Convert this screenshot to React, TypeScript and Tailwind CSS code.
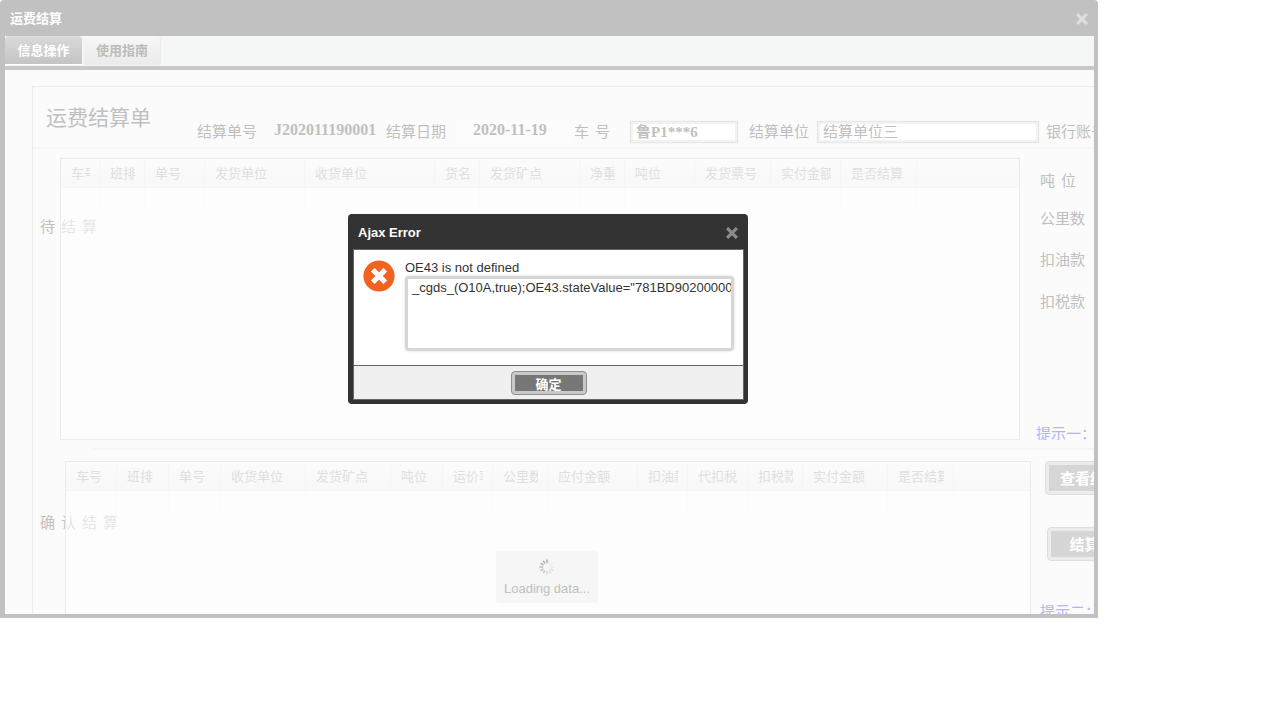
import { useState, type ReactNode } from "react";

type Column = { label: string; width: string };

const pendingColumns: Column[] = [
  { label: "车号", width: "w-[39px]" },
  { label: "班排", width: "w-[45px]" },
  { label: "单号", width: "w-[60px]" },
  { label: "发货单位", width: "w-[100px]" },
  { label: "收货单位", width: "w-[130px]" },
  { label: "货名", width: "w-[45px]" },
  { label: "发货矿点", width: "w-[100px]" },
  { label: "净重", width: "w-[45px]" },
  { label: "吨位", width: "w-[70px]" },
  { label: "发货票号", width: "w-[76px]" },
  { label: "实付金额", width: "w-[70px]" },
  { label: "是否结算", width: "w-[76px]" },
];

const confirmedColumns: Column[] = [
  { label: "车号", width: "w-[51px]" },
  { label: "班排", width: "w-[52px]" },
  { label: "单号", width: "w-[52px]" },
  { label: "收货单位", width: "w-[85px]" },
  { label: "发货矿点", width: "w-[85px]" },
  { label: "吨位", width: "w-[52px]" },
  { label: "运价率", width: "w-[50px]" },
  { label: "公里数", width: "w-[55px]" },
  { label: "应付金额", width: "w-[90px]" },
  { label: "扣油款", width: "w-[50px]" },
  { label: "代扣税", width: "w-[60px]" },
  { label: "扣税款", width: "w-[55px]" },
  { label: "实付金额", width: "w-[85px]" },
  { label: "是否结算", width: "w-[66px]" },
];

const spokes = [
  "#a8a8a8",
  "#f0f0f0",
  "#ececec",
  "#e8e8e8",
  "#e2e2e2",
  "#dcdcdc",
  "#d2d2d2",
  "#cacaca",
  "#c4c4c4",
  "#bcbcbc",
  "#b6b6b6",
  "#b0b0b0",
];

function CloseIcon() {
  return (
    <svg viewBox="0 0 12 12" className="size-3" aria-hidden>
      <path
        d="M2.2 2.2 9.8 9.8M9.8 2.2 2.2 9.8"
        stroke="currentColor"
        strokeWidth="3.2"
        strokeLinecap="square"
      />
    </svg>
  );
}

function ErrorIcon() {
  return (
    <svg viewBox="0 0 32 32" className="size-8 shrink-0" aria-hidden>
      <circle cx="16" cy="16" r="15.6" fill="#f26322" />
      <path
        d="M11.6 11.6 20.4 20.4M20.4 11.6 11.6 20.4"
        stroke="#fff"
        strokeWidth="5.2"
        strokeLinecap="square"
      />
    </svg>
  );
}

function Spinner() {
  return (
    <svg viewBox="0 0 16 16" className="size-4" aria-hidden>
      {spokes.map((color, i) => (
        <path
          key={color}
          d="M8 .5V4"
          stroke={color}
          strokeWidth="1.5"
          transform={`rotate(${i * 30} 8 8)`}
        />
      ))}
    </svg>
  );
}

function Grid({ name, columns }: { name: string; columns: Column[] }) {
  return (
    <table
      aria-label={name}
      className="w-full table-fixed border-separate border-spacing-0 text-left text-[13px] leading-5"
    >
      <thead>
        <tr className="h-[29px] bg-linear-to-b from-[#fbfbfb] to-[#f8f8f8]">
          {columns.map((col) => (
            <th
              key={col.label}
              className={`${col.width} border-r border-b border-[#f5f5f5] pt-px pr-[9px] pb-0 pl-2.5 font-normal text-[#dfdfdf]`}
            >
              <span className="block overflow-hidden whitespace-nowrap">
                {col.label}
              </span>
            </th>
          ))}
          <th className="border-b border-[#f5f5f5] p-0" />
        </tr>
      </thead>
      <tbody>
        <tr className="h-6">
          {columns.map((col) => (
            <td key={col.label} className="border-r border-[#fbfbfb] p-0" />
          ))}
          <td className="p-0" />
        </tr>
      </tbody>
    </table>
  );
}

/** Spaced caption that runs underneath its grid. */
function SideCaption({ text, className }: { text: string; className: string }) {
  return (
    <h2 className={`absolute left-[7px] flex gap-1.5 leading-5 ${className}`}>
      {text.split("").map((char) => (
        <span key={char}>{char}</span>
      ))}
    </h2>
  );
}

function FormButton({
  className,
  children,
}: {
  className: string;
  children: ReactNode;
}) {
  return (
    <button
      type="button"
      className={`h-[34px] w-[90px] shrink-0 rounded border border-[#dedede] bg-[#ececec] p-[3px] font-bold whitespace-nowrap text-white ${className}`}
    >
      <span className="flex h-full items-center justify-center bg-[#d6d6d6] pt-0.5">
        {children}
      </span>
    </button>
  );
}

function ErrorDialog({ onClose }: { onClose: () => void }) {
  return (
    <div className="absolute inset-0 z-30 flex items-center justify-center pr-0.5">
      <div
        role="alertdialog"
        aria-labelledby="error-title"
        className="w-[400px] rounded bg-[#333] pr-1 pb-1 pl-[5px] text-[13px] text-[#333]"
      >
        <div className="flex h-[35px] items-center justify-between pt-[3px] pr-1.5 pl-[5px]">
          <h2 id="error-title" className="font-bold text-white">
            Ajax Error
          </h2>
          <button
            type="button"
            aria-label="关闭"
            onClick={onClose}
            className="text-[#8c8c8c]"
          >
            <CloseIcon />
          </button>
        </div>
        <div className="border border-[#666] bg-white">
          <div className="flex items-start gap-2.5 px-[9px] pt-2.5 pb-3.5">
            <ErrorIcon />
            <div className="flex-1">
              <label htmlFor="error-detail" className="block h-4 leading-4">
                OE43 is not defined
              </label>
              <textarea
                id="error-detail"
                readOnly
                wrap="off"
                defaultValue={
                  '_cgds_(O10A,true);OE43.stateValue="781BD90200000001";'
                }
                className="block h-[75px] w-full resize-none overflow-hidden rounded border-[3px] border-[#d6d6d6] bg-white px-1 py-px leading-4 shadow-[0_0_2px_1px_#ededed] outline-none"
              />
            </div>
          </div>
          <div className="flex h-[34px] items-center justify-center border-t border-[#666] bg-[#f0f0f0]">
            <button
              type="button"
              onClick={onClose}
              className="h-6 w-[76px] rounded border border-[#8f8f8f] bg-[#c9c9c9] p-[3px] font-bold text-white"
            >
              <span className="flex h-full items-center justify-center bg-[#777] pt-1">
                确定
              </span>
            </button>
          </div>
        </div>
      </div>
    </div>
  );
}

export default function App() {
  const [error, setError] = useState(true);

  return (
    <div className="min-h-screen bg-white pr-[185px] font-['Liberation_Sans','Noto_Sans_CJK_SC',sans-serif]">
      <main className="relative overflow-hidden rounded-t bg-[#c1c1c1] pr-1 pb-1 pl-[5px]">
        <header className="flex h-9 items-center justify-between pt-0.5 pr-1.5 pl-[5px] text-[13px] text-white">
          <h1 className="font-bold">运费结算</h1>
          <button type="button" aria-label="关闭窗口" className="text-[#dedede]">
            <CloseIcon />
          </button>
        </header>

        <nav className="flex h-[34px] items-start gap-0.5 border-b-4 border-[#c8c8c8] bg-[#f5f7f7] text-[13px] font-bold">
          <button
            type="button"
            className="h-[29px] w-[77px] rounded-t-sm border-b border-white bg-linear-to-b from-[#dadada] to-[#c4c4c4] pt-0.5 text-white"
          >
            信息操作
          </button>
          <button
            type="button"
            className="h-[29px] w-[77px] rounded-t-sm border-r border-b border-[#ebebeb] bg-linear-to-b from-[#f7f7f7] to-[#ebebeb] pt-0.5 text-[#bcbcbc]"
          >
            使用指南
          </button>
        </nav>

        <div className="overflow-hidden bg-[#fbfbfb] pt-4 pl-[27px] text-[15px] whitespace-nowrap text-[#c0c0c0]">
          <form className="border-t border-l border-[#ebebeb] font-['Liberation_Serif','Noto_Sans_CJK_SC',serif]">
            <div className="flex h-[62px] border-b-2 border-[#f5f5f5] pl-[13px] *:shrink-0">
              <h2 className="w-[151px] pt-4 text-[21px] leading-[30px]">
                运费结算单
              </h2>
              <div className="flex items-center pt-[29px] leading-5 *:shrink-0">
                <span className="w-[77px]">结算单号</span>
                <span className="w-[112px] pb-1 text-base leading-5 font-bold">
                  J202011190001
                </span>
                <span className="w-[69px]">结算日期</span>
                <span className="w-[119px] bg-[#fcfcfc] pb-1 pl-[18px] text-base leading-5 font-bold">
                  2020-11-19
                </span>
                <label htmlFor="plate" className="flex w-[57px] gap-1.5">
                  <span>车</span>
                  <span>号</span>
                </label>
                <input
                  id="plate"
                  defaultValue="鲁P1***6"
                  className="h-5 w-[106px] border-2 border-[#f2f2f2] bg-white px-[3px] font-bold shadow-[0_0_1px_1px_#e8e8e8] outline-none"
                />
                <label htmlFor="payee" className="w-[81px] pl-3">
                  结算单位
                </label>
                <input
                  id="payee"
                  defaultValue="结算单位三"
                  className="h-5 w-[220px] border-2 border-[#f2f2f2] bg-white px-[3px] shadow-[0_0_1px_1px_#e8e8e8] outline-none"
                />
                <span className="pl-2">银行账号</span>
              </div>
            </div>

            <section className="relative flex pt-[9px] pl-[27px]">
              <SideCaption text="待结算" className="top-[68px]" />
              <div className="relative h-[282px] w-[960px] shrink-0 border border-[#ebebeb] bg-white/60">
                <Grid name="待结算" columns={pendingColumns} />
              </div>
              <div className="flex w-0 flex-1 flex-col overflow-hidden pt-[13px] pl-5 leading-5">
                <span className="flex h-[38px] shrink-0 gap-1.5">
                  <span>吨</span>
                  <span>位</span>
                </span>
                <span className="h-[41px]">公里数</span>
                <span className="h-[42px]">扣油款</span>
                <span>扣税款</span>
                <strong className="mt-auto -mb-1 -ml-1 h-5 font-normal text-[#b3b3ff]">
                  提示一：结算前请核对
                </strong>
              </div>
            </section>

            <div className="mt-2 ml-[59px] h-0.5 bg-[#f5f5f5]" />

            <section className="relative flex pt-[11px] pl-8">
              <SideCaption text="确认结算" className="top-[63px]" />
              <div className="relative h-[153px] w-[966px] shrink-0 border border-b-0 border-[#ebebeb] bg-white/60">
                <Grid name="确认结算" columns={confirmedColumns} />
                <div
                  role="status"
                  className="absolute inset-x-0 top-[89px] flex justify-center pr-0.5"
                >
                  <div className="flex h-[52px] w-[102px] flex-col items-center gap-[5px] rounded-sm bg-[#f6f6f6] pt-2 font-['Liberation_Sans',sans-serif] text-[13px] leading-[18px]">
                    <Spinner />
                    Loading data...
                  </div>
                </div>
              </div>
              <div className="flex h-[153px] w-0 flex-1 flex-col items-start overflow-hidden pl-[9px] leading-5">
                <FormButton className="ml-[5px]">查看结算</FormButton>
                <FormButton className="mt-8 ml-[7px]">结算单</FormButton>
                <strong className="mt-[41px] font-normal text-[#b3b3ff]">
                  提示二：确认后不可修改
                </strong>
              </div>
            </section>
          </form>
        </div>

        {error && <ErrorDialog onClose={() => setError(false)} />}
      </main>
    </div>
  );
}
